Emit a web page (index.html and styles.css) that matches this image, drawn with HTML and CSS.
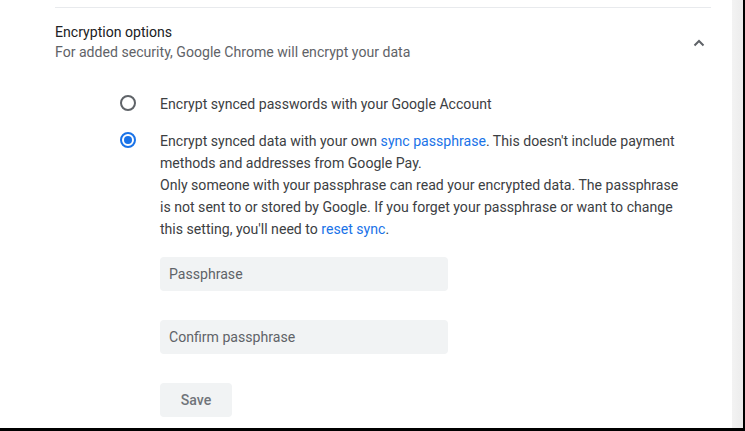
FILE: index.html
```html
<!DOCTYPE html>
<html>
<head>
<meta charset="utf-8">
<link rel="stylesheet" href="styles.css">
</head>
<body>
<div class="frame">
  <div class="page">
    <main class="content">
      <div class="divider"></div>
      <div class="header">
        <div class="header-text">
          <div class="title">Encryption options</div>
          <div class="subtitle">For added security, Google Chrome will encrypt your data</div>
        </div>
        <div class="chevron">
          <svg width="12" height="8" viewBox="0 0 12 8"><path d="M1.5 6.5 L6 2 L10.5 6.5" fill="none" stroke="#5f6368" stroke-width="2"/></svg>
        </div>
      </div>
      <div class="options">
        <div class="option">
          <span class="radio"></span>
          <div class="option-text">Encrypt synced passwords with your Google Account</div>
        </div>
        <div class="option">
          <span class="radio checked"></span>
          <div class="option-text">
            <p class="para">Encrypt synced data with your own <a class="link">sync passphrase</a>. This doesn't include payment methods and addresses from Google Pay.</p>
            <p class="para">Only someone with your passphrase can read your encrypted data. The passphrase is not sent to or stored by Google. If you forget your passphrase or want to change this setting, you'll need to <a class="link">reset sync</a>.</p>
          </div>
        </div>
      </div>
      <div class="form">
        <div class="field">Passphrase</div>
        <div class="field">Confirm passphrase</div>
        <div class="save">Save</div>
      </div>
    </main>
    <div class="scroll-strip"></div>
  </div>
</div>
</body>
</html>
```
FILE: styles.css
```css
html, body {
  margin: 0;
  padding: 0;
  background: #000;
}
body {
  font-family: Roboto, "Noto Sans", sans-serif;
  color: #202124;
  width: 745px;
  height: 431px;
  overflow: hidden;
}
.frame {
  width: 743px;
  height: 428px;
  background: #fff;
}
.page {
  display: flex;
  height: 100%;
}
.content {
  flex: 1;
  padding-left: 55px;
  padding-top: 7px;
  padding-right: 21px;
}
.scroll-strip {
  width: 11px;
  background: linear-gradient(to right, #f3f3f3, #ececec);
}
.divider {
  height: 1px;
  background: #e8eaed;
}
.header {
  display: flex;
  align-items: center;
  margin-top: 14px;
}
.header-text {
  flex: 1;
  font-size: 14.1px;
  line-height: 20px;
}
.title {
  color: #202124;
}
.subtitle {
  color: #5f6368;
}
.chevron {
  width: 24px;
  display: flex;
  justify-content: center;
  margin-top: 2px;
}
.options {
  margin-top: 30px;
  padding-left: 65px;
  display: flex;
  flex-direction: column;
  gap: 14px;
}
.option {
  display: flex;
  font-size: 14.1px;
  line-height: 22px;
  color: #3c4043;
}
.radio {
  box-sizing: border-box;
  width: 16px;
  height: 16px;
  border: 2px solid #5f6368;
  border-radius: 50%;
  margin-top: 3px;
  margin-right: 24px;
  flex: none;
  position: relative;
}
.radio.checked {
  border-color: #1a73e8;
}
.radio.checked::after {
  content: "";
  position: absolute;
  left: 2px;
  top: 2px;
  width: 8px;
  height: 8px;
  border-radius: 50%;
  background: #1a73e8;
}
.option-text {
  width: 528px;
  padding-top: 1px;
}
.para {
  margin: 0;
}
.link {
  color: #1a73e8;
}
.form {
  margin-top: 17px;
  padding-left: 105px;
  display: flex;
  flex-direction: column;
  align-items: flex-start;
  gap: 29px;
}
.field {
  box-sizing: border-box;
  width: 288px;
  height: 34px;
  background: #f1f3f4;
  border-radius: 4px;
  padding-left: 9px;
  font-size: 14.1px;
  line-height: 34px;
  color: #5f6368;
}
.save {
  width: 72px;
  height: 34px;
  background: #f1f3f4;
  border-radius: 4px;
  text-align: center;
  line-height: 34px;
  font-size: 14.1px;
  font-weight: 500;
  color: #70757a;
}
```
